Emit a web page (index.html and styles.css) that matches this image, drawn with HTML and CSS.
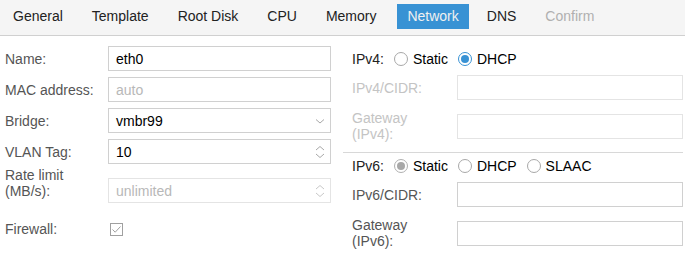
FILE: index.html
```html
<!DOCTYPE html>
<html lang="en">
  <head>
    <meta charset="UTF-8" />
    <title>Create: LXC Container</title>
    <link rel="stylesheet" href="styles.css">
  </head>
  <body>
    <div class="tabs">
      <span class="tab">General</span>
      <span class="tab">Template</span>
      <span class="tab">Root Disk</span>
      <span class="tab">CPU</span>
      <span class="tab">Memory</span>
      <span class="tab active">Network</span>
      <span class="tab">DNS</span>
      <span class="tab disabled">Confirm</span>
    </div>

    <div class="panel">
      <!-- left column -->
      <div class="column left">
        <div class="row">
          <label class="label">Name:</label>
          <div class="field">eth0</div>
        </div>
        <div class="row">
          <label class="label">MAC address:</label>
          <div class="field empty">auto</div>
        </div>
        <div class="row">
          <label class="label">Bridge:</label>
          <div class="field trigger">
            vmbr99
            <svg class="icon" width="12" height="12" viewBox="0 0 12 12"><path d="M2 4.5 L6 8 L10 4.5" /></svg>
          </div>
        </div>
        <div class="row">
          <label class="label">VLAN Tag:</label>
          <div class="field trigger">
            10
            <svg class="icon" width="12" height="16" viewBox="0 0 12 16"><path d="M2 6 L6 2.5 L10 6 M2 10 L6 13.5 L10 10" /></svg>
          </div>
        </div>
        <div class="row tall">
          <label class="label">Rate limit<br>(MB/s):</label>
          <div class="field trigger empty faded">
            unlimited
            <svg class="icon" width="12" height="16" viewBox="0 0 12 16"><path d="M2 6 L6 2.5 L10 6 M2 10 L6 13.5 L10 10" /></svg>
          </div>
        </div>
        <div class="row">
          <label class="label">Firewall:</label>
          <span class="checkbox">
            <svg width="13" height="13" viewBox="0 0 13 13"><rect x="0.5" y="0.5" width="12" height="12" /><path d="M2.5 6.5 L5.2 9.2 L10.5 3.5" /></svg>
          </span>
        </div>
      </div>

      <!-- right column -->
      <div class="column right">
        <div class="row radios">
          <span class="radio-label">IPv4:</span>
          <span class="radio"><span class="dot"></span>Static</span>
          <span class="radio checked"><span class="dot"></span>DHCP</span>
        </div>
        <div class="row">
          <label class="label off">IPv4/CIDR:</label>
          <div class="field off"></div>
        </div>
        <div class="row tall">
          <label class="label off">Gateway<br>(IPv4):</label>
          <div class="field off"></div>
        </div>
        <div class="separator"></div>
        <div class="row radios">
          <span class="radio-label">IPv6:</span>
          <span class="radio grey"><span class="dot"></span>Static</span>
          <span class="radio"><span class="dot"></span>DHCP</span>
          <span class="radio"><span class="dot"></span>SLAAC</span>
        </div>
        <div class="row">
          <label class="label">IPv6/CIDR:</label>
          <div class="field"></div>
        </div>
        <div class="row tall">
          <label class="label">Gateway<br>(IPv6):</label>
          <div class="field"></div>
        </div>
      </div>
    </div>
  </body>
</html>
```

FILE: styles.css
```css
body {
  margin: 0;
  font-family: "Liberation Sans", Arial, sans-serif;
  font-size: 14px;
  color: #000;
  background: #fff;
  width: 685px;
  height: 259px;
  overflow: hidden;
}
.tabs {
  display: flex;
  gap: 9px;
  align-items: center;
  height: 36px;
  padding-left: 3px;
  background: #f5f5f5;
  border-bottom: 1px solid #d0d0d0;
  box-sizing: border-box;
}
.tab {
  padding: 0 10px;
  height: 25px;
  line-height: 25px;
  margin-top: -3px;
  color: #222;
}
.tab.active {
  background: #3892d4;
  color: #f0f0f0;
  margin-left: 2px;
}
.tab.active + .tab {
  margin-left: -1px;
}
.tab.disabled {
  color: #b0b0b0;
}
.panel {
  display: flex;
  padding-top: 10px;
}
.column.left {
  width: 343px;
  padding-left: 5px;
  box-sizing: border-box;
}
.column.right {
  flex: 1;
  padding-right: 2px;
}
.row {
  display: flex;
  align-items: center;
  min-height: 25px;
  margin-bottom: 6px;
}
.left .row.tall {
  align-items: flex-start;
  min-height: 40px;
}
.left .row.tall .label {
  margin-top: -3px;
}
.left .row.tall .field {
  margin-top: 8px;
}
.right .row {
  margin-bottom: 4px;
}
.right .row.tall {
  padding: 5px 0 4px;
  min-height: 34px;
  margin-bottom: 0;
}
.label {
  width: 103px;
  flex: none;
  color: #555;
  line-height: 16px;
}
.right .label {
  width: 105px;
  padding-left: 9px;
}
.label.off {
  color: #c4c4c4;
}
.field {
  flex: 1;
  display: flex;
  align-items: center;
  justify-content: space-between;
  height: 25px;
  box-sizing: border-box;
  border: 1px solid #d0d0d0;
  padding: 0 7px;
  margin-right: 12px;
  color: #000;
}
.right .field {
  margin-right: 0;
}
.field.empty {
  color: #b8b8b8;
}
.field.faded,
.field.off {
  border-color: #e4e4e4;
}
.icon {
  fill: none;
  stroke: #a8a8a8;
  stroke-width: 1;
  margin-right: -3px;
}
.faded .icon {
  stroke: #c8c8c8;
}
.checkbox {
  margin-left: 2px;
  margin-top: 1px;
  display: flex;
}
.checkbox svg {
  fill: none;
  stroke: #a0a0a0;
  stroke-width: 1;
}
.radios {
  padding-left: 9px;
}
.radio-label {
  color: #222;
  margin-right: 10px;
}
.radio {
  display: flex;
  align-items: center;
  gap: 5px;
  margin-right: 10px;
}
.dot {
  width: 14px;
  height: 14px;
  border: 1px solid #a8a8a8;
  border-radius: 50%;
  box-sizing: border-box;
  position: relative;
}
.checked .dot {
  border-color: #3892d4;
}
.checked .dot::after,
.grey .dot::after {
  content: "";
  position: absolute;
  left: 2px;
  top: 2px;
  width: 8px;
  height: 8px;
  border-radius: 50%;
  background: #3892d4;
}
.grey .dot {
  border-color: #b0b0b0;
}
.grey .dot::after {
  background: #a8a8a8;
}
.separator {
  border-top: 1px solid #d8d8d8;
  margin: 5px 0 0 0;
  height: 0;
}
```
